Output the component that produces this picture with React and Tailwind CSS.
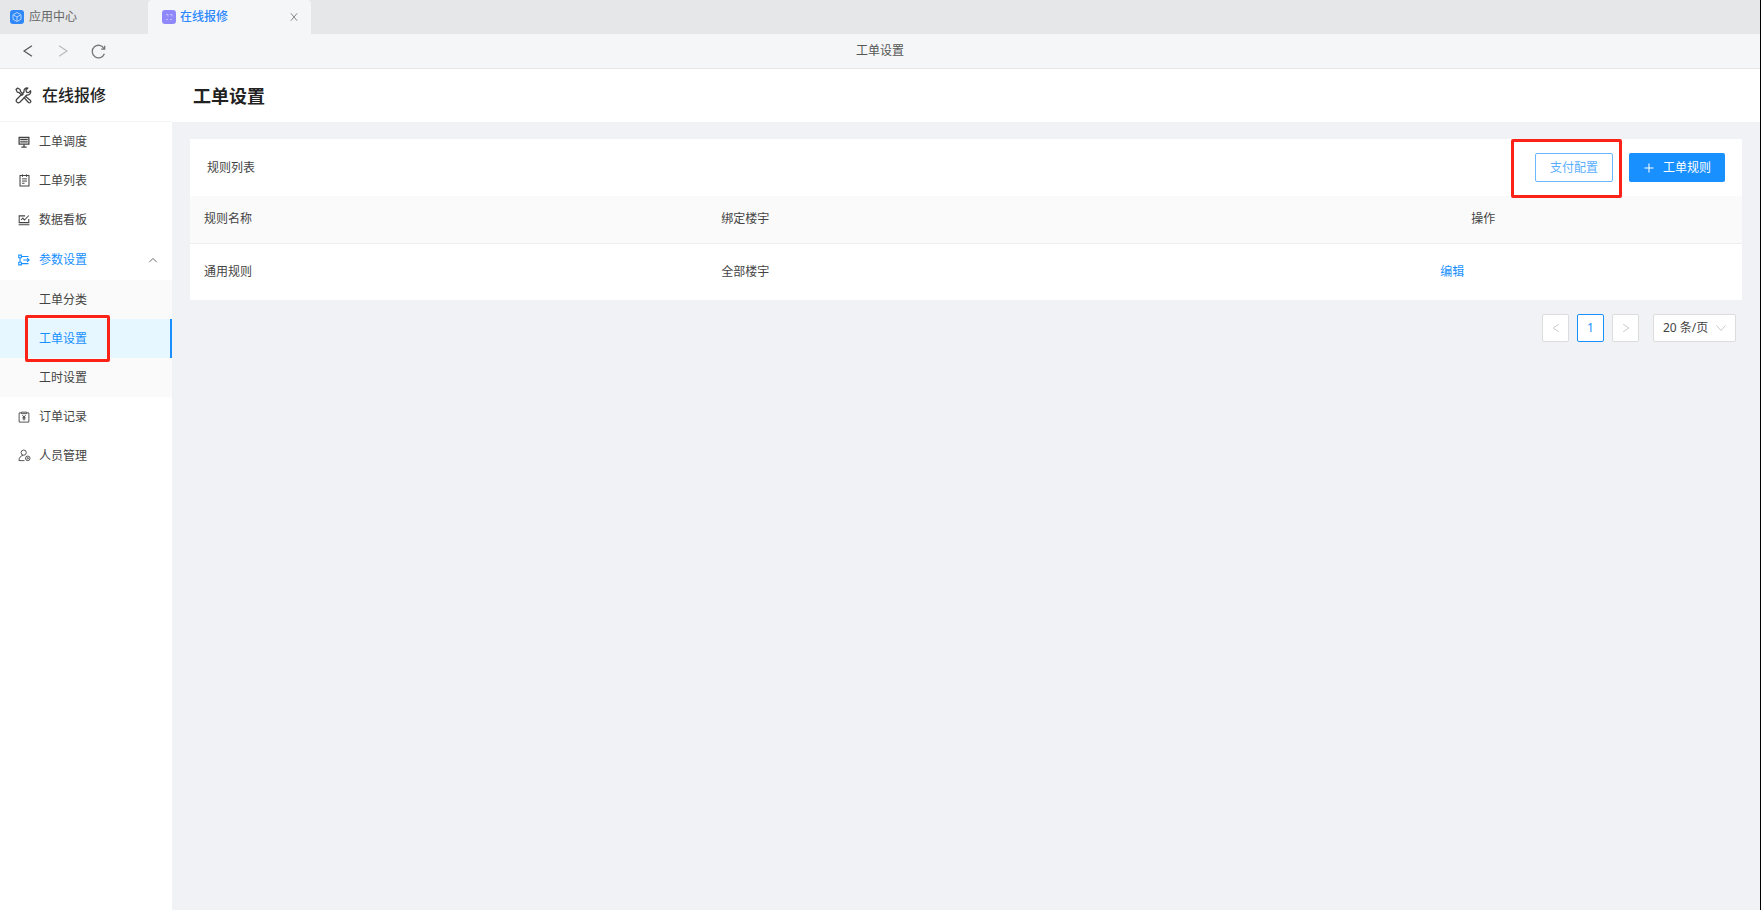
import { useState } from "react";

const menuBefore = [
  { label: "工单调度", icon: DispatchIcon },
  { label: "工单列表", icon: ListIcon },
  { label: "数据看板", icon: BoardIcon },
];

const subMenu = ["工单分类", "工单设置", "工时设置"];

const menuAfter = [
  { label: "订单记录", icon: OrderIcon },
  { label: "人员管理", icon: StaffIcon },
];

const rules = [{ name: "通用规则", building: "全部楼宇" }];

function Svg({ size = 12, children, className = "" }) {
  return (
    <svg
      width={size}
      height={size}
      viewBox="0 0 16 16"
      fill="none"
      stroke="currentColor"
      strokeWidth="1.4"
      aria-hidden="true"
      className={`shrink-0 ${className}`}
    >
      {children}
    </svg>
  );
}

function DispatchIcon() {
  return (
    <Svg>
      <path d="M1.5 2h13v8.800h-13zM3 4.800h10M3 7.800h10" strokeWidth="1.7" />
      <path d="M8 11v3.500M4.500 14.700h7" strokeWidth="1.6" />
    </Svg>
  );
}

function ListIcon() {
  return (
    <Svg size={13}>
      <path d="M2.500 1.800h11v13h-11z" strokeWidth="1.3" />
      <path d="M5.500.5v3M10.500.5v3M5 6h6M5 8.700h6M5 11.400h3" strokeWidth="1.2" />
    </Svg>
  );
}

function BoardIcon() {
  return (
    <Svg>
      <path d="M9.500 2.500H1.600v9h12.800V6.500M.8 14.300h14.400" />
      <path d="M4 8l2.500-2.500L8.500 8 14.500 2" />
    </Svg>
  );
}

function SettingIcon() {
  return (
    <Svg>
      <path d="M1 1.500h3.500V5H1zM1 11h3.500v3.500H1zM2.700 5v6M4.500 3.200H14M4.500 12.800H14" />
      <path d="M7 8h8M12 5.500 14.800 8 12 10.500" />
    </Svg>
  );
}

function OrderIcon() {
  return (
    <Svg>
      <path d="M4.500 2.500h-3v12.300h13V2.500h-3M4.500 1.500h7v2h-7z" strokeWidth="1.2" />
      <path d="M5.800 5.500 8 8l2.200-2.500M8 8v4.500M6 8.500h4M6 10.500h4" strokeWidth="1.2" />
    </Svg>
  );
}

function StaffIcon() {
  return (
    <Svg size={13}>
      <g strokeWidth="1.1">
        <circle cx="7" cy="4.500" r="3.200" />
        <path d="M8 14.300H1.200c0-3.800 2-5.800 5-6.400" />
        <circle cx="12" cy="11.500" r="2.800" />
        <circle cx="12" cy="11.500" r=".9" />
      </g>
    </Svg>
  );
}

function ToolsIcon() {
  return (
    <Svg size={17} className="text-[#444]">
      <g strokeWidth="1.200" strokeLinejoin="round">
        <path d="M1 2.400 2.500 1l2.300 1.300.4 1.900 2.500 2.500-1.200 1.200L4 5.400l-1.800-.5z" />
        <path d="M9.500 8.400 14.600 12.700c.9 1.300-.7 2.800-1.900 1.900L8.300 9.700" />
        <path d="M14.600 3.500 12.800 5.300l-2-.5-.5-2L12.100 1C10 .5 8 2.200 8.500 4.700L1.700 11.500c-1.600 1.900.9 4.400 2.800 2.800l6.700-6.800c2.400.5 4.100-1.700 3.400-4z" />
      </g>
    </Svg>
  );
}

function Chevron({ d, size = 12, className }) {
  return (
    <Svg size={size} className={className}>
      <path d={d} />
    </Svg>
  );
}

const LEFT = "M12.500 2 3.500 8l9 6";
const RIGHT = "M3.500 2l9 6-9 6";

function TabBar() {
  return (
    <div className="flex h-[34px] bg-[#e5e7e9]">
      <a href="#apps" className="flex w-[148px] items-center gap-[5px] pl-[10px] pb-px text-[#666]">
        <svg width="14" height="14" viewBox="0 0 14 14" fill="none" aria-hidden="true">
          <rect width="14" height="14" rx="3" fill="#2f87f8" />
          <path d="M7 2.500 11 4.700v4.600L7 11.500 3 9.300V4.700zM3.500 5 7 7l3.500-2M7 7v4" stroke="#b5d6ff" />
        </svg>
        应用中心
      </a>
      <div className="flex w-[163px] items-center rounded-t bg-[#f4f6f8] pr-3 pb-px pl-[14px]">
        <a href="#repair" className="flex flex-1 items-center gap-1 font-medium text-[#2b87ff]">
          <svg width="14" height="14" viewBox="0 0 14 14" fill="none" aria-hidden="true">
            <rect width="14" height="14" rx="3" fill="#8f88fa" />
            <path d="M4 4.500h2v2M8 4.500h2v2M4 9.500h2M8 9.500h2" stroke="#c4bfff" />
          </svg>
          在线报修
        </a>
        <button type="button" aria-label="关闭" className="text-[#777]">
          <Svg size={10}>
            <path d="M3 2l10 12M13 2L3 14" />
          </Svg>
        </button>
      </div>
    </div>
  );
}

function NavBar() {
  return (
    <div className="grid h-[35px] grid-cols-3 items-center border-b border-[#e4e6e8] bg-[#f4f6f8]">
      <div className="flex items-center gap-[21px] pl-[21px]">
        <button type="button" aria-label="后退" className="text-[#555]">
          <Chevron d={LEFT} size={14} />
        </button>
        <button type="button" aria-label="前进" className="text-[#bbb]">
          <Chevron d={RIGHT} size={14} />
        </button>
        <button type="button" aria-label="刷新" className="text-[#777]">
          <Svg size={15}>
            <path d="M14 5A6.700 6.700 0 1 0 14.300 10.500M14.600 1.800v3.700h-3.800" />
          </Svg>
        </button>
      </div>
      <div className="text-center text-[#555]">工单设置</div>
    </div>
  );
}

function MenuItem({ label, icon: Icon }) {
  return (
    <a href="#menu" className="flex h-[39px] items-center gap-[9px] pl-[18px]">
      <span className="flex w-3 justify-center">
        <Icon />
      </span>
      {label}
    </a>
  );
}

function Sidebar() {
  const [open, setOpen] = useState(true);
  const [active, setActive] = useState("工单设置");

  return (
    <aside className="w-[172px] shrink-0 bg-white">
      <div className="flex h-[53px] items-center gap-[10px] border-b border-[#f3f4f6] pl-[15px] text-base font-medium text-[#222]">
        <ToolsIcon />
        在线报修
      </div>
      <nav>
        {menuBefore.map((item) => (
          <MenuItem key={item.label} {...item} />
        ))}
        <button
          type="button"
          onClick={() => setOpen(!open)}
          className="flex h-[41px] w-full items-center gap-[9px] pr-[14px] pl-[18px] text-[#1890ff]"
        >
          <SettingIcon />
          <span className="flex-1 text-left">参数设置</span>
          <Chevron d="M2 11.500l6-6 6 6" size={10} className="text-[#555]" />
        </button>
        {open && (
          <div className="bg-[#fafafa]">
            {subMenu.map((label) => (
              <div key={label} className="relative">
                <a
                  href="#sub"
                  onClick={() => setActive(label)}
                  className={
                    label === active
                      ? "flex h-[39px] items-center border-r-2 border-[#1890ff] bg-[#e6f7ff] pl-[39px] text-[#1890ff]"
                      : "flex h-[39px] items-center pl-[39px]"
                  }
                >
                  {label}
                </a>
                {label === "工单设置" && (
                  <span className="pointer-events-none absolute -inset-y-1 left-[25px] w-[85px] rounded-xs border-3 border-[#fb2318]" />
                )}
              </div>
            ))}
          </div>
        )}
        {menuAfter.map((item) => (
          <MenuItem key={item.label} {...item} />
        ))}
      </nav>
    </aside>
  );
}

function RuleCard() {
  return (
    <section className="bg-white">
      <div className="flex h-[57px] items-center justify-between px-[17px]">
        <h2>规则列表</h2>
        <div className="flex items-center gap-4">
          <div className="relative">
            <button
              type="button"
              className="h-[29px] rounded-xs border border-[#69b8ff] px-[14px] text-[#5aaeff]"
            >
              支付配置
            </button>
            <span className="pointer-events-none absolute -top-[14px] -right-[9px] -bottom-4 -left-6 rounded-xs border-3 border-[#fb2318]" />
          </div>
          <button
            type="button"
            className="flex h-[29px] items-center gap-2 rounded-xs bg-[#1890ff] px-[14px] text-white"
          >
            <Svg size={12}>
              <path d="M8 2v12M2 8h12" />
            </Svg>
            工单规则
          </button>
        </div>
      </div>
      <table className="w-full table-fixed text-left">
        <thead>
          <tr className="h-[47px] border-b border-[#efefef] bg-[#fafafa]">
            <th className="px-[14px] font-normal">规则名称</th>
            <th className="px-[14px] font-normal">绑定楼宇</th>
            <th className="px-[14px] text-center font-normal">操作</th>
          </tr>
        </thead>
        <tbody>
          {rules.map((rule) => (
            <tr key={rule.name} className="h-[57px]">
              <td className="px-[14px]">{rule.name}</td>
              <td className="px-[14px]">{rule.building}</td>
              <td className="px-[14px]">
                <div className="mx-auto w-[86px]">
                  <a href="#edit" className="text-[#1890ff]">编辑</a>
                </div>
              </td>
            </tr>
          ))}
        </tbody>
      </table>
    </section>
  );
}

function Pagination() {
  return (
    <div className="mt-[14px] flex items-center justify-end gap-2 pr-[6px]">
      <button
        type="button"
        aria-label="上一页"
        className="flex h-7 w-[27px] items-center justify-center rounded-xs border border-[#dcdcdc] bg-white text-[#c4c4c4]"
      >
        <Chevron d={LEFT} size={10} />
      </button>
      <button
        type="button"
        className="h-7 w-[27px] rounded-xs border border-[#1890ff] bg-white text-[#1890ff]"
      >
        1
      </button>
      <button
        type="button"
        aria-label="下一页"
        className="flex h-7 w-[27px] items-center justify-center rounded-xs border border-[#dcdcdc] bg-white text-[#c4c4c4]"
      >
        <Chevron d={RIGHT} size={10} />
      </button>
      <div className="relative ml-[6px]">
        <select
          aria-label="每页条数"
          defaultValue="20"
          className="block h-7 w-[83px] appearance-none rounded-xs border border-[#dcdcdc] bg-white pl-[9px]"
        >
          <option value="10">10 条/页</option>
          <option value="20">20 条/页</option>
          <option value="50">50 条/页</option>
        </select>
        <Chevron
          d="M1 4l7 8 7-8"
          size={10}
          className="pointer-events-none absolute top-[9px] right-[10px] text-[#c4c4c4]"
        />
      </div>
    </div>
  );
}

export default function App() {
  return (
    <div className="flex min-h-screen flex-col border-r border-black bg-[#f0f2f5] font-['Noto_Sans','Noto_Sans_CJK_SC',sans-serif] text-xs text-[#444]">
      <TabBar />
      <NavBar />
      <div className="flex flex-1">
        <Sidebar />
        <main className="min-w-0 flex-1">
          <header className="flex h-[53px] items-center bg-white px-[21px]">
            <h1 className="text-lg font-bold text-[#222]">工单设置</h1>
          </header>
          <div className="px-[18px] py-[17px]">
            <RuleCard />
            <Pagination />
          </div>
        </main>
      </div>
    </div>
  );
}
